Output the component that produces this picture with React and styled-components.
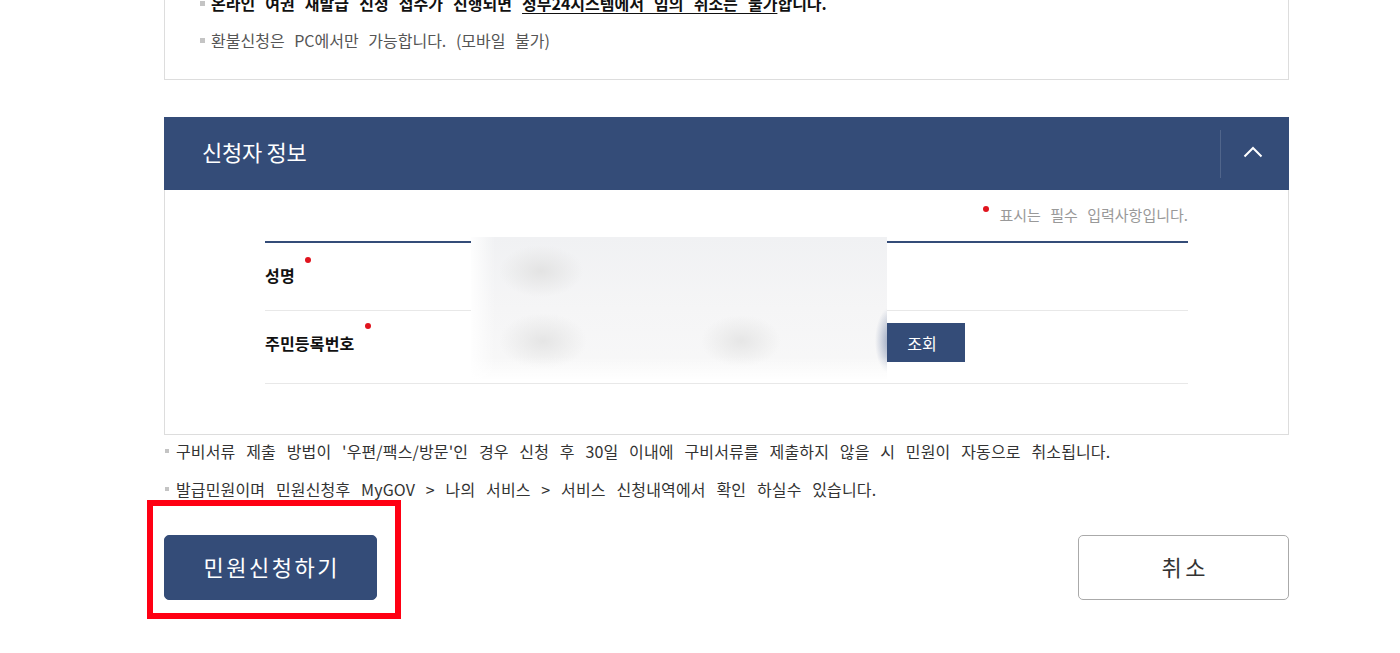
import React from "react";
import styled, { createGlobalStyle } from "styled-components";

const GlobalStyle = createGlobalStyle`
  html {
    overflow: hidden;
  }
  body {
    margin: 0;
    background: #fff;
    font-family: "Noto Sans CJK KR", "Noto Sans", sans-serif;
    color: #333;
  }
`;

const NAVY = "#344c78";

const Page = styled.div`
  width: 1125px;
  margin: -33px 0 0 164px;
  padding-bottom: 60px;
`;

const NoticeBox = styled.div`
  border: 1px solid #ddd;
  padding: 22px 35px 26px;
  display: flex;
  flex-direction: column;
  gap: 11px;
`;

const Bullet = styled.p`
  margin: 0;
  display: flex;
  align-items: center;
  gap: ${p => (p.small ? "7px" : "6px")};
  font-size: 16px;
  line-height: 26px;
  letter-spacing: 0;
  word-spacing: ${p => (p.strong ? "6.5px" : "6px")};
  color: ${p => (p.strong ? "#111" : "#555")};
  font-weight: ${p => (p.strong ? 700 : 400)};
  white-space: nowrap;
  &::before {
    content: "";
    width: ${p => (p.small ? "4px" : "5px")};
    height: ${p => (p.small ? "4px" : "5px")};
    background: #c4c4c4;
    flex: none;
  }
  u {
    text-underline-offset: 3px;
  }
`;

const PanelHead = styled.div`
  margin-top: 37px;
  height: 73px;
  background: ${NAVY};
  display: flex;
  align-items: center;
  justify-content: space-between;
  padding-left: 38px;
`;

const PanelTitle = styled.h3`
  margin: 0 0 5px;
  font-size: 22px;
  font-weight: 400;
  color: #fff;
  letter-spacing: -0.3px;
`;

const Toggle = styled.button`
  width: 69px;
  height: 48px;
  border: none;
  border-left: 1px solid rgba(255, 255, 255, 0.14);
  background: transparent;
  display: flex;
  align-items: center;
  justify-content: center;
  padding: 0 4px 4px 0;
  cursor: pointer;
`;

const PanelBody = styled.div`
  border: 1px solid #ddd;
  border-top: none;
  padding: 14px 100px 50px;
`;

const Required = styled.p`
  margin: 0 0 15px;
  display: flex;
  justify-content: flex-end;
  font-size: 15px;
  line-height: 22px;
  color: #999;
  word-spacing: 6px;
`;

const Dot = styled.span`
  display: inline-block;
  width: 6px;
  height: 6px;
  border-radius: 50%;
  background: #e0141e;
  align-self: flex-start;
  margin: ${p => p.m || "0"};
`;

const Table = styled.div`
  position: relative;
  border-top: 2px solid ${NAVY};
`;

const Row = styled.div`
  display: grid;
  grid-template-columns: 206px 1fr;
  height: ${p => p.h}px;
  border-bottom: 1px solid #e8e8e8;
`;

const Label = styled.div`
  display: flex;
  align-items: center;
  padding-bottom: ${p => p.lift || 0}px;
  font-size: 16px;
  font-weight: 700;
  color: #111;
  letter-spacing: 0.2px;
`;

const Cell = styled.div`
  display: flex;
  align-items: flex-start;
  padding: 12px 0 0 416px;
`;

const SearchBtn = styled.button`
  width: 78px;
  height: 39px;
  border: none;
  background: ${NAVY};
  color: #fff;
  font-family: inherit;
  font-size: 16px;
  padding: 0 8px 0 0;
  cursor: pointer;
`;

const Redacted = styled.div`
  position: absolute;
  left: 206px;
  top: -6px;
  width: 416px;
  height: 142px;
  background:
    linear-gradient(to right, rgba(255,255,255,0.9), rgba(255,255,255,0) 24px),
    linear-gradient(to top, rgba(255,255,255,0.9), rgba(255,255,255,0) 22px),
    radial-gradient(ellipse 42px 26px at 70px 34px, #e3e3e3, rgba(230,230,230,0)),
    radial-gradient(ellipse 44px 28px at 72px 104px, #e5e5e5, rgba(230,230,230,0)),
    radial-gradient(ellipse 40px 26px at 270px 104px, #e6e6e6, rgba(230,230,230,0)),
    radial-gradient(ellipse 16px 34px at 420px 104px, #93a0bb, rgba(170,182,205,0)),
    linear-gradient(to bottom, #f0f1f3, #f5f5f6 50%, #f8f8f8);
`;

const Notes = styled.div`
  margin-top: 5px;
  display: flex;
  flex-direction: column;
  gap: 16px;
`;

const NoteLine = styled(Bullet)`
  line-height: 22px;
  color: #333;
  gap: 7px;
  padding-left: 1px;
  letter-spacing: 0.15px;
  word-spacing: 7px;
`;

const Actions = styled.div`
  margin-top: 35px;
  display: flex;
  justify-content: space-between;
`;

const Highlight = styled.div`
  position: relative;
  &::after {
    content: "";
    position: absolute;
    left: -17px;
    top: -35px;
    right: -24px;
    bottom: -19px;
    border: 6px solid #ff0013;
    pointer-events: none;
  }
`;

const ActionBtn = styled.button`
  display: block;
  width: ${p => p.w}px;
  height: 65px;
  border-radius: 5px;
  border: 1px solid ${p => (p.primary ? NAVY : "#aaa")};
  background: ${p => (p.primary ? NAVY : "#fff")};
  color: ${p => (p.primary ? "#fff" : "#333")};
  font-family: inherit;
  font-size: 22px;
  letter-spacing: ${p => (p.primary ? "2.5px" : "3.5px")};
  padding: 0 0 4px ${p => (p.primary ? "2.5px" : "3.5px")};
  cursor: pointer;
`;

export default function App() {
  return (
    <>
      <GlobalStyle />
      <Page>
        <NoticeBox>
          <Bullet strong>
            <span>
              온라인 여권 재발급 신청 접수가 진행되면 <u>정부24시스템에서 임의 취소는 불가</u>합니다.
            </span>
          </Bullet>
          <Bullet>환불신청은 PC에서만 가능합니다. (모바일 불가)</Bullet>
        </NoticeBox>

        <PanelHead>
          <PanelTitle>신청자 정보</PanelTitle>
          <Toggle aria-label="접기">
            <svg width="20" height="12" viewBox="0 0 20 12">
              <polyline points="1.5,10.5 10,2 18.5,10.5" fill="none" stroke="#fff" strokeWidth="2" />
            </svg>
          </Toggle>
        </PanelHead>

        <PanelBody>
          <Required>
            <Dot m="2px 11px 0 0" />
            표시는 필수 입력사항입니다.
          </Required>
          <Table>
            <Row h={67}>
              <Label lift={3}>
                성명
                <Dot m="14px 0 0 10px" />
              </Label>
              <Cell />
            </Row>
            <Row h={72}>
              <Label lift={8}>
                주민등록번호
                <Dot m="12px 0 0 10px" />
              </Label>
              <Cell>
                <SearchBtn>조회</SearchBtn>
              </Cell>
            </Row>
            <Redacted />
          </Table>
        </PanelBody>

        <Notes>
          <NoteLine small>
            구비서류 제출 방법이 '우편/팩스/방문'인 경우 신청 후 30일 이내에 구비서류를 제출하지 않을 시 민원이 자동으로 취소됩니다.
          </NoteLine>
          <NoteLine small>
            발급민원이며 민원신청후 MyGOV &gt; 나의 서비스 &gt; 서비스 신청내역에서 확인 하실수 있습니다.
          </NoteLine>
        </Notes>

        <Actions>
          <Highlight>
            <ActionBtn primary w={213}>민원신청하기</ActionBtn>
          </Highlight>
          <ActionBtn w={211}>취소</ActionBtn>
        </Actions>
      </Page>
    </>
  );
}
